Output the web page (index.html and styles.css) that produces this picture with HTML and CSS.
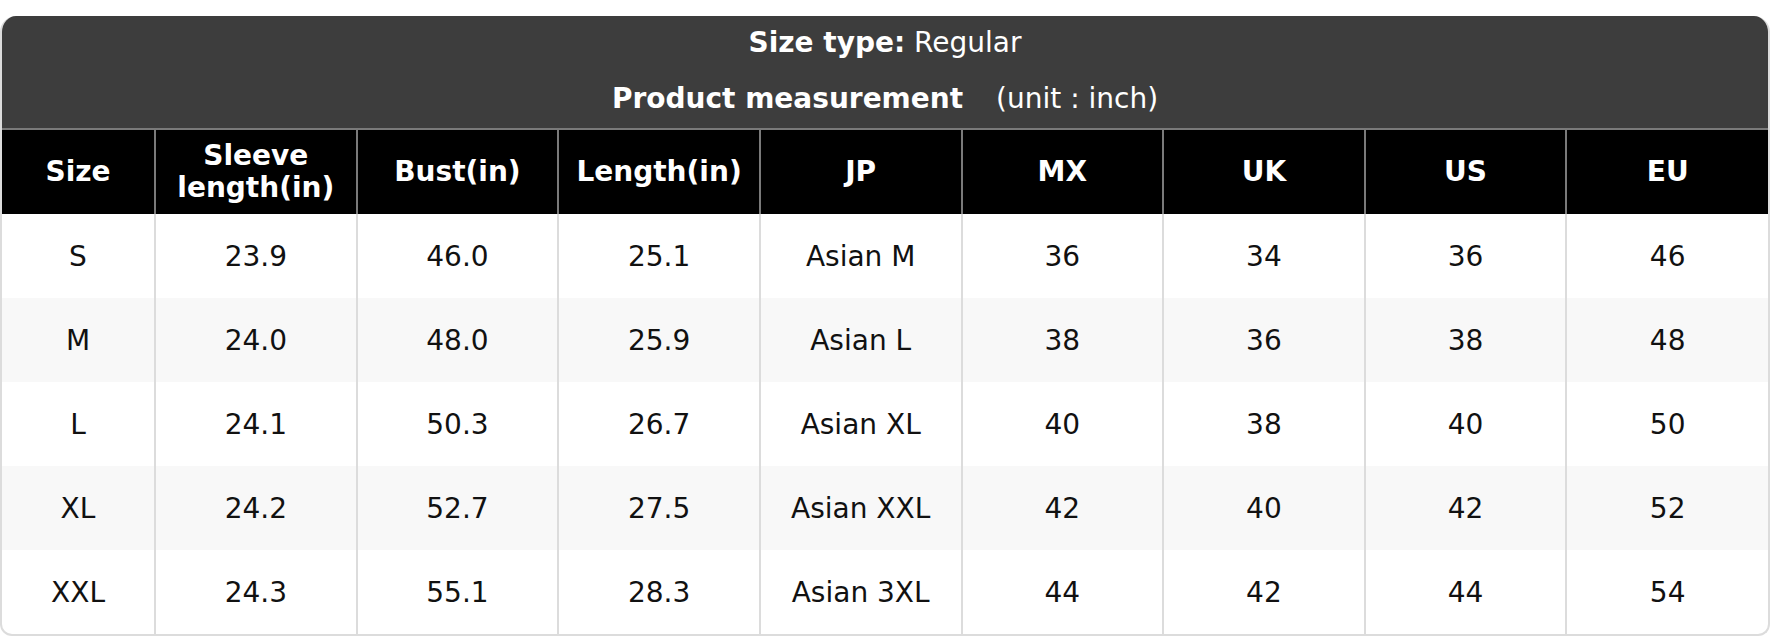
FILE: index.html
```html
<!DOCTYPE html>
<html>
<head>
<meta charset="utf-8">
<link rel="stylesheet" href="styles.css">
</head>
<body>
<div class="card">
  <div class="title">
    <div class="title-line"><b>Size type:</b> Regular</div>
    <div class="title-line"><b>Product measurement</b><span class="unit">(unit : inch)</span></div>
  </div>
  <table class="sizes">
    <colgroup>
      <col class="c-first">
      <col><col><col><col><col><col><col><col>
    </colgroup>
    <thead>
      <tr>
        <th>Size</th><th>Sleeve<br>length(in)</th><th>Bust(in)</th><th>Length(in)</th><th>JP</th><th>MX</th><th>UK</th><th>US</th><th>EU</th>
      </tr>
    </thead>
    <tbody>
      <tr><td>S</td><td>23.9</td><td>46.0</td><td>25.1</td><td>Asian M</td><td>36</td><td>34</td><td>36</td><td>46</td></tr>
      <tr><td>M</td><td>24.0</td><td>48.0</td><td>25.9</td><td>Asian L</td><td>38</td><td>36</td><td>38</td><td>48</td></tr>
      <tr><td>L</td><td>24.1</td><td>50.3</td><td>26.7</td><td>Asian XL</td><td>40</td><td>38</td><td>40</td><td>50</td></tr>
      <tr><td>XL</td><td>24.2</td><td>52.7</td><td>27.5</td><td>Asian XXL</td><td>42</td><td>40</td><td>42</td><td>52</td></tr>
      <tr><td>XXL</td><td>24.3</td><td>55.1</td><td>28.3</td><td>Asian 3XL</td><td>44</td><td>42</td><td>44</td><td>54</td></tr>
    </tbody>
  </table>
</div>
</body>
</html>
```

FILE: styles.css
```css
html, body {
  margin: 0;
  padding: 0;
  background: #ffffff;
}
body {
  font-family: "DejaVu Sans", Verdana, sans-serif;
  font-size: 28px;
  color: #111111;
}
.card {
  box-sizing: border-box;
  width: 1770px;
  margin-top: 16px;
  border: 2px solid #dcdcdc;
  border-top: 0;
  border-radius: 16px 16px 12px 12px;
  overflow: hidden;
}
.title {
  background: #3d3d3d;
  color: #ffffff;
  text-align: center;
}
.title-line {
  height: 56px;
  line-height: 54px;
}
.unit {
  margin-left: 33px;
}
.sizes {
  width: 100%;
  border-collapse: collapse;
  table-layout: fixed;
}
.c-first {
  width: 153px;
}
.sizes th {
  background: #000000;
  color: #ffffff;
  font-weight: bold;
  height: 84px;
  line-height: 32px;
  padding: 0;
  text-align: center;
  border-top: 2px solid #7a7a7a;
  border-left: 2px solid #7a7a7a;
}
.sizes th:first-child {
  border-left: 0;
}
.sizes td {
  height: 84px;
  padding: 0;
  text-align: center;
  border-left: 2px solid #dcdcdc;
}
.sizes td:first-child {
  border-left: 0;
}
.sizes tbody tr:nth-child(even) td {
  background: #f8f8f8;
}
```
